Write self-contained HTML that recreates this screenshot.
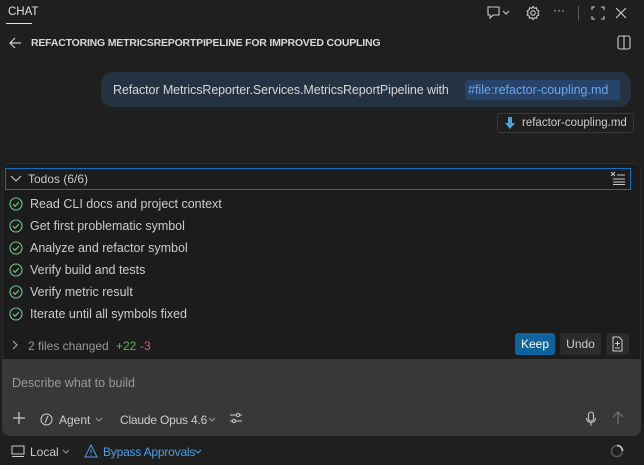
<!DOCTYPE html>
<html><head><style>
*{box-sizing:border-box;margin:0;padding:0}
body{width:644px;height:465px;background:#1f1f1f;font-family:"Liberation Sans",sans-serif;color:#ccc;position:relative;overflow:hidden;font-size:13px}
.a{position:absolute;white-space:nowrap}
svg{position:absolute}
</style></head><body>
<div class="a" style="left:8px;top:6px;font-size:11.5px;color:#e0e0e0">CHAT</div>
<div class="a" style="left:6px;top:23px;width:26px;height:1px;background:#e0e0e0"></div>
<svg style="left:486px;top:5px" width="30" height="16" viewBox="0 0 30 16" fill="none" stroke="#ccc" stroke-width="1.1"><path d="M2 2h11v8H7l-3 3v-3H2z"/><path d="M17 6l3 3 3-3"/></svg>
<svg style="left:525px;top:5px" width="16" height="16" viewBox="0 0 16 16" fill="none" stroke="#ccc" stroke-width="1.1"><circle cx="8" cy="8" r="2.2"/><path d="M8 1.5l1.3 1.8 2.2-.5.4 2.2 2 1-1 2 1 2-2 1-.4 2.2-2.2-.5L8 14.5l-1.3-1.8-2.2.5-.4-2.2-2-1 1-2-1-2 2-1 .4-2.2 2.2.5z"/></svg>
<div class="a" style="left:553px;top:3px;color:#ccc;font-size:12px">···</div>
<div class="a" style="left:578px;top:6px;width:1px;height:15px;background:#555"></div>
<svg style="left:591px;top:6px" width="14" height="14" viewBox="0 0 14 14" fill="none" stroke="#ccc" stroke-width="1.1"><path d="M1 4V1h3M10 1h3v3M13 10v3h-3M4 13H1v-3"/></svg>
<svg style="left:614px;top:6px" width="14" height="14" viewBox="0 0 14 14" stroke="#ccc" stroke-width="1.2"><path d="M2 2l10 10M12 2L2 12"/></svg>
<svg style="left:8px;top:36px" width="14" height="14" viewBox="0 0 14 14" fill="none" stroke="#ccc" stroke-width="1.2"><path d="M13 7H2M7 2L2 7l5 5"/></svg>
<div class="a" style="left:31px;top:37px;font-size:10.5px;font-weight:bold;color:#d8d8d8;letter-spacing:-0.2px">REFACTORING METRICSREPORTPIPELINE FOR IMPROVED COUPLING</div>
<svg style="left:617px;top:35px" width="14" height="15" viewBox="0 0 14 15" fill="none" stroke="#ccc" stroke-width="1.1"><rect x="1" y="1" width="12" height="13" rx="2"/><path d="M7 1v13"/></svg>
<div class="a" style="left:101px;top:72px;width:530px;height:35px;background:#253242;border-radius:12px"></div>
<div class="a" style="left:113px;top:83px;font-size:12.5px;color:#d6d6d6;letter-spacing:-0.1px">Refactor MetricsReporter.Services.MetricsReportPipeline with</div>
<div class="a" style="left:465px;top:80px;width:155px;height:20px;background:#26436a;border-radius:3px"></div>
<div class="a" style="left:468px;top:83px;font-size:12.5px;color:#6ba7ec">#file:refactor-coupling.md</div>
<div class="a" style="left:497px;top:113px;width:137px;height:20px;border:1px solid #3a3a3a;border-radius:3px;background:#1f1f1f"></div>
<svg style="left:505px;top:117px" width="10" height="12" viewBox="0 0 10 12"><path d="M3 0h4v6h3L5 12 0 6h3z" fill="#4aa3df"/></svg>
<div class="a" style="left:522px;top:117px;font-size:11.5px;color:#ccc">refactor-coupling.md</div>
<div class="a" style="left:2px;top:163px;width:639px;height:200px;background:#1c1c1c;border:1px solid #2a2a2a;border-radius:6px 6px 0 0"></div>
<div class="a" style="left:5px;top:168px;width:626px;height:22px;border:1px solid #0e70c0"></div>
<svg style="left:10px;top:174px" width="12" height="10" viewBox="0 0 12 10" fill="none" stroke="#ccc" stroke-width="1.1"><path d="M1 2l5 5 5-5"/></svg>
<div class="a" style="left:28px;top:172px;font-size:12px;color:#ccc">Todos (6/6)</div>
<svg style="left:610px;top:171px" width="16" height="14" viewBox="0 0 16 14" fill="none" stroke="#ccc" stroke-width="1"><path d="M1 1l4 4M5 1L1 5M7 4h8M3 8h12M3 11h12M3 13.5h12"/></svg>
<div id="todos"></div>
<svg style="left:11px;top:340px" width="8" height="10" viewBox="0 0 8 10" fill="none" stroke="#aaa" stroke-width="1.1"><path d="M2 1l4 4-4 4"/></svg>
<div class="a" style="left:28px;top:339px;font-size:12px;color:#999">2 files changed</div>
<div class="a" style="left:116px;top:339px;font-size:12px;color:#5fb15f">+22</div>
<div class="a" style="left:140px;top:339px;font-size:12px;color:#e05b5b">-3</div>
<div class="a" style="left:515px;top:333px;width:40px;height:22px;background:#0e639c;border-radius:3px;color:#fff;font-size:12px;text-align:center;line-height:22px">Keep</div>
<div class="a" style="left:560px;top:333px;width:41px;height:22px;background:#2b2b2b;border-radius:3px;color:#ccc;font-size:12px;text-align:center;line-height:22px">Undo</div>
<div class="a" style="left:606px;top:333px;width:23px;height:22px;background:#2b2b2b;border-radius:3px"></div>
<svg style="left:611px;top:336px" width="13" height="16" viewBox="0 0 13 16" fill="none" stroke="#ccc" stroke-width="1"><path d="M2 1h6l3 3v11H2z M6.5 5v5M4 7.5h5M4 12h5"/></svg>
<div class="a" style="left:2px;top:359px;width:639px;height:77px;background:#383838;border-radius:0 0 8px 8px"></div>
<div class="a" style="left:12px;top:376px;font-size:12.5px;color:#999">Describe what to build</div>
<svg style="left:12px;top:411px" width="14" height="14" viewBox="0 0 14 14" stroke="#ccc" stroke-width="1.2"><path d="M7 1v12M1 7h12"/></svg>
<svg style="left:40px;top:413px" width="13" height="13" viewBox="0 0 13 13" fill="none" stroke="#ccc" stroke-width="1"><circle cx="6.5" cy="6.5" r="5.5"/><path d="M8 3L5 10"/></svg>
<div class="a" style="left:59px;top:413px;font-size:12px;color:#ccc">Agent</div>
<svg style="left:95px;top:417px" width="8" height="6" viewBox="0 0 8 6" fill="none" stroke="#999"><path d="M1 1l3 3 3-3"/></svg>
<div class="a" style="left:120px;top:413px;font-size:12px;color:#ccc;letter-spacing:-0.2px">Claude Opus 4.6</div>
<svg style="left:208px;top:417px" width="8" height="6" viewBox="0 0 8 6" fill="none" stroke="#999"><path d="M1 1l3 3 3-3"/></svg>
<svg style="left:229px;top:411px" width="14" height="14" viewBox="0 0 14 14" fill="none" stroke="#ccc" stroke-width="1"><path d="M1 4h12M1 10h12"/><circle cx="9" cy="4" r="1.6" fill="#383838"/><circle cx="5" cy="10" r="1.6" fill="#383838"/></svg>
<svg style="left:585px;top:411px" width="12" height="16" viewBox="0 0 12 16" fill="none" stroke="#ccc" stroke-width="1.1"><rect x="3.5" y="1" width="5" height="9" rx="2.5"/><path d="M1.5 7a4.5 4.5 0 009 0M6 11.5v3"/></svg>
<svg style="left:612px;top:411px" width="12" height="14" viewBox="0 0 12 14" fill="none" stroke="#777" stroke-width="1.1"><path d="M6 13V1M1 6l5-5 5 5"/></svg>
<svg style="left:11px;top:445px" width="14" height="13" viewBox="0 0 14 13" fill="none" stroke="#ccc" stroke-width="1"><rect x="1" y="1" width="12" height="8"/><path d="M1 11.5h12"/></svg>
<div class="a" style="left:30px;top:445px;font-size:12px;color:#ccc">Local</div>
<svg style="left:62px;top:449px" width="8" height="6" viewBox="0 0 8 6" fill="none" stroke="#999"><path d="M1 1l3 3 3-3"/></svg>
<svg style="left:84px;top:444px" width="14" height="14" viewBox="0 0 14 14" fill="none" stroke="#4d9ee8" stroke-width="1"><path d="M7 1L13 13H1z M7 5.5v4M7 11v.8"/></svg>
<div class="a" style="left:103px;top:445px;font-size:12px;color:#4d9ee8;letter-spacing:-0.2px">Bypass Approvals</div>
<svg style="left:194px;top:449px" width="8" height="6" viewBox="0 0 8 6" fill="none" stroke="#4d9ee8"><path d="M1 1l3 3 3-3"/></svg>
<svg style="left:610px;top:444px" width="14" height="14" viewBox="0 0 14 14" fill="none" stroke-width="1.6"><circle cx="7" cy="7" r="5.5" stroke="#555"/><path d="M7 1.5a5.5 5.5 0 015.5 5.5" stroke="#ccc"/></svg>
<script>
var t=["Read CLI docs and project context","Get first problematic symbol","Analyze and refactor symbol","Verify build and tests","Verify metric result","Iterate until all symbols fixed"],h="";
t.forEach(function(s,i){var y=197+i*22;h+='<svg style="left:9px;top:'+y+'px" width="14" height="14" viewBox="0 0 14 14" fill="none" stroke="#73c991" stroke-width="1.1"><circle cx="7" cy="7" r="6"/><path d="M4 7.2l2.1 2.1L10 5"/></svg><div class="a" style="left:30px;top:'+(y)+'px;font-size:12.5px;color:#ccc">'+s+'</div>';});
document.getElementById("todos").outerHTML=h;
</script>
</body></html>
